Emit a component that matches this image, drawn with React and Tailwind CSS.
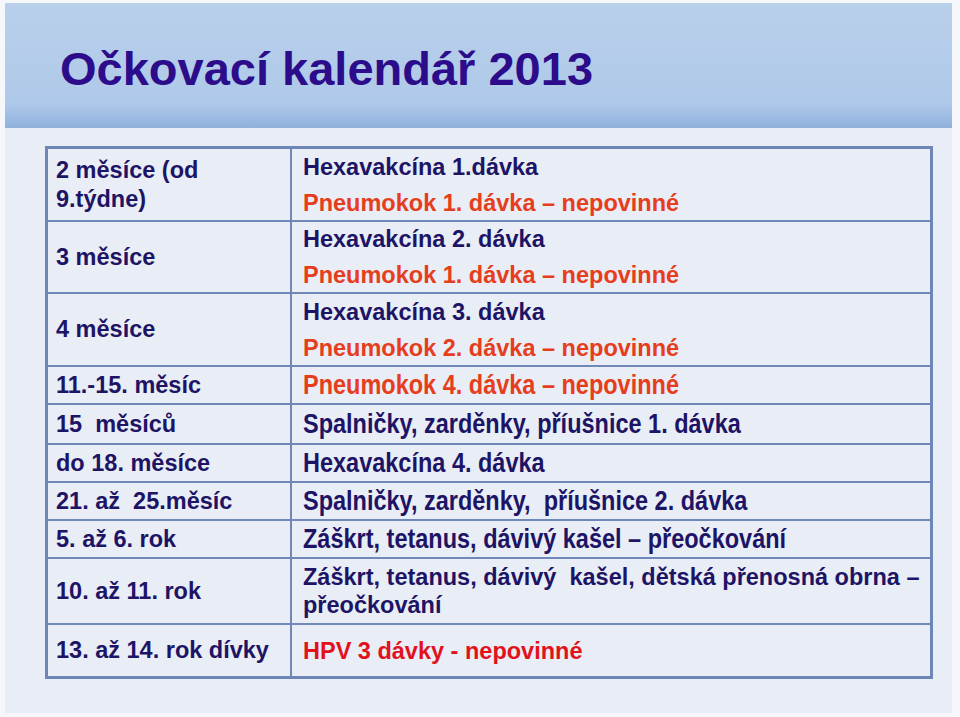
import React from 'react';

const NAVY = 'text-[#1d1466]';
const RED = 'text-[#e63d1c]';

const rows = [
  {
    h: 'h-[71px]',
    left: ['2 měsíce (od', '9.týdne)'],
    right: [
      { text: 'Hexavakcína 1.dávka', c: NAVY },
      { text: 'Pneumokok 1. dávka – nepovinné', c: RED },
    ],
  },
  {
    h: 'h-[72px]',
    left: ['3 měsíce'],
    right: [
      { text: 'Hexavakcína 2. dávka', c: NAVY },
      { text: 'Pneumokok 1. dávka – nepovinné', c: RED },
    ],
  },
  {
    h: 'h-[73px]',
    left: ['4 měsíce'],
    right: [
      { text: 'Hexavakcína 3. dávka', c: NAVY },
      { text: 'Pneumokok 2. dávka – nepovinné', c: RED },
    ],
  },
  { h: 'h-[38px]', left: ['11.-15. měsíc'], narrow: true, right: [{ text: 'Pneumokok 4. dávka – nepovinné', c: RED }] },
  { h: 'h-[40px]', left: ['15  měsíců'], narrow: true, right: [{ text: 'Spalničky, zarděnky, příušnice 1. dávka', c: NAVY }] },
  { h: 'h-[38px]', left: ['do 18. měsíce'], narrow: true, right: [{ text: 'Hexavakcína 4. dávka', c: NAVY }] },
  { h: 'h-[38px]', left: ['21. až  25.měsíc'], narrow: true, right: [{ text: 'Spalničky, zarděnky,  příušnice 2. dávka', c: NAVY }] },
  { h: 'h-[38px]', left: ['5. až 6. rok'], narrow: true, right: [{ text: 'Záškrt, tetanus, dávivý kašel – přeočkování', c: NAVY }] },
  {
    h: 'h-[66px]',
    left: ['10. až 11. rok'],
    wrap: true,
    right: [
      { text: 'Záškrt, tetanus, dávivý  kašel, dětská přenosná obrna –', c: NAVY },
      { text: 'přeočkování', c: NAVY },
    ],
  },
  { h: 'h-[53px]', left: ['13. až 14. rok dívky'], right: [{ text: 'HPV 3 dávky - nepovinné', c: 'text-[#e2121c]' }] },
];

function Row({ row, first }) {
  return (
    <div className={`flex ${row.h} ${first ? '' : 'border-t-2'} border-[#7088b8]`}>
      <div className={`w-[244px] shrink-0 flex flex-col justify-center pl-[8px] border-r-2 border-[#7088b8] ${NAVY} text-[23.5px] font-bold leading-[29px] whitespace-pre`}>
        {row.left.map((l, i) => (
          <div key={i}>{l}</div>
        ))}
      </div>
      <div className="flex-1 flex flex-col justify-center pl-[11px] whitespace-pre">
        {row.right.map((r, i) =>
          row.narrow ? (
            <div key={i} className={`${r.c} text-[27px] leading-[30px] font-bold`}>
              {/* condensed face, like the slide's narrow bold */}
              <span className="inline-block origin-left scale-x-[0.87]">{r.text}</span>
            </div>
          ) : (
            <div
              key={i}
              className={`${r.c} text-[23.5px] font-bold ${row.wrap ? 'leading-[28px]' : 'leading-[36px]'}`}
            >
              {r.text}
            </div>
          )
        )}
      </div>
    </div>
  );
}

export default function App() {
  return (
    <div className="w-[960px] h-[717px] bg-[#f5f7fb] pl-[5px] pr-[8px] pt-[3px] pb-[4px] [font-family:'Liberation_Sans',Arial,sans-serif]">
      <div className="h-full flex flex-col bg-[#e9edf5]">
        {/* Header band */}
        <div className="h-[125px] shrink-0 bg-gradient-to-b from-[#b9d0eb] via-[#afc9e9] via-80% to-[#8fb1dd] flex items-center pl-[55px] pt-[6px]">
          <h1 className="text-[47px] font-bold text-[#2c0c8b] leading-none">Očkovací kalendář 2013</h1>
        </div>

        {/* Table */}
        <div className="pl-[40px] pt-[18px]">
          <div className="w-[888px] border-[3px] border-[#6e86b7]">
            {rows.map((row, i) => (
              <Row key={i} row={row} first={i === 0} />
            ))}
          </div>
        </div>
      </div>
    </div>
  );
}
